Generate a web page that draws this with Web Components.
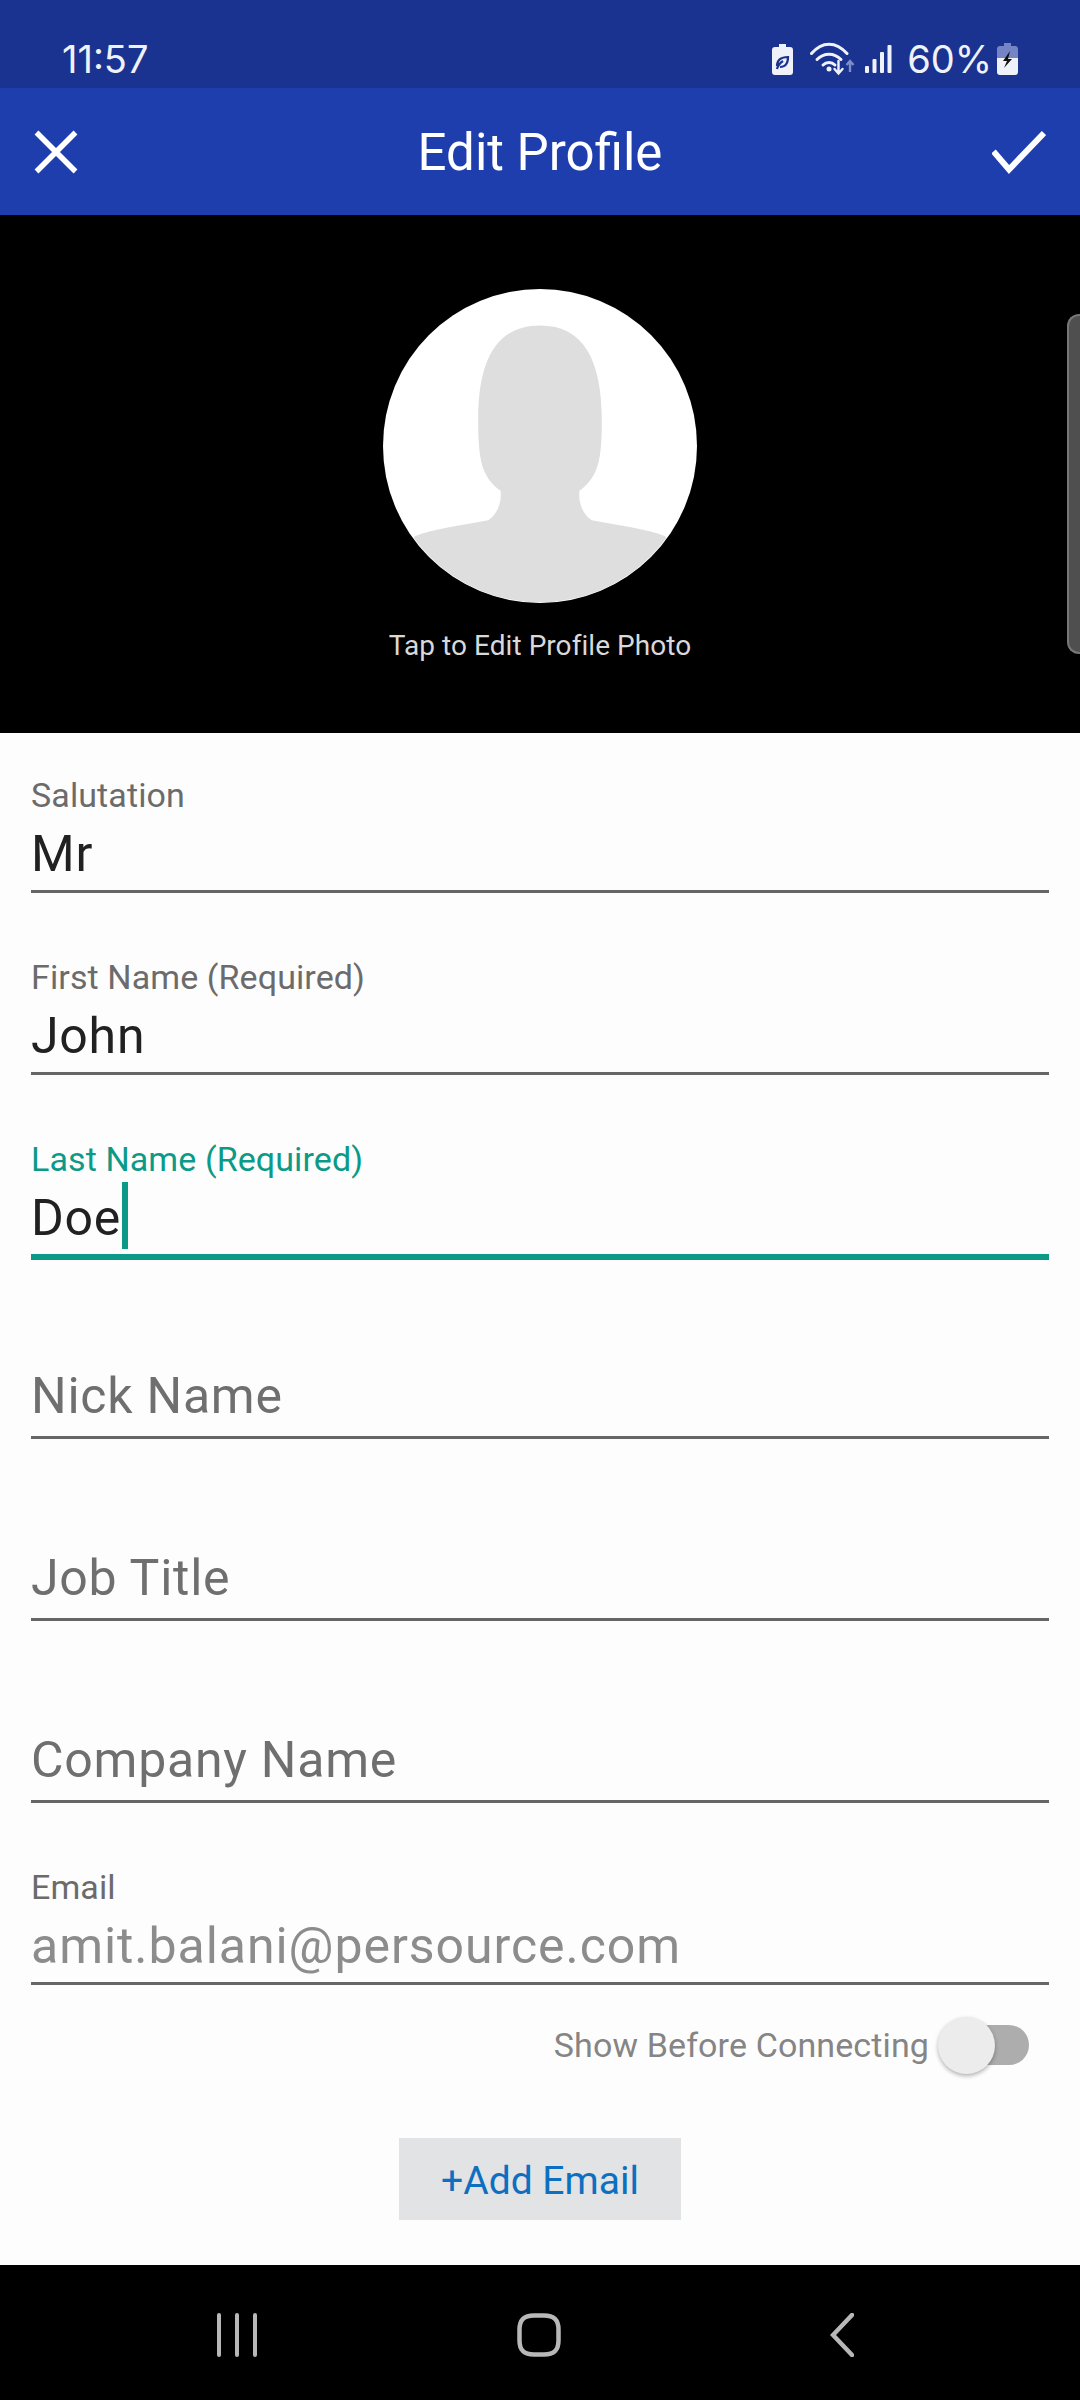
<!DOCTYPE html>
<html>
<head>
<meta charset="utf-8">
<title>Edit Profile</title>
<style>
  html, body { margin: 0; padding: 0; }
  body {
    width: 1080px;
    height: 2400px;
    overflow: hidden;
    display: flex;
    flex-direction: column;
    font-family: Roboto, "Liberation Sans", sans-serif;
    background: #fefdfe;
  }
</style>
</head>
<body>
  <status-bar time="11:57" level="60%"></status-bar>
  <app-bar title="Edit Profile"></app-bar>
  <profile-photo caption="Tap to Edit Profile Photo"></profile-photo>
  <profile-form>
    <form-field label="Salutation">Mr</form-field>
    <form-field label="First Name (Required)">John</form-field>
    <form-field label="Last Name (Required)" focused>Doe</form-field>
    <form-field placeholder>Nick Name</form-field>
    <form-field placeholder>Job Title</form-field>
    <form-field placeholder>Company Name</form-field>
    <form-field label="Email" disabled>amit.balani@persource.com</form-field>
    <show-toggle>Show Before Connecting</show-toggle>
    <add-button>+Add Email</add-button>
  </profile-form>
  <nav-bar></nav-bar>

<script>
// Barra de estado del teléfono
class StatusBar extends HTMLElement {
  constructor() {
    super();
    this.attachShadow({ mode: 'open' });
  }

  connectedCallback() {
    this.shadowRoot.innerHTML = `
      <style>
        :host {
          display: flex;
          align-items: center;
          height: 88px;
          padding: 30px 62px 0 62px;
          box-sizing: border-box;
          background: #1a3290;
          color: #f0f2fa;
          font-family: Inter, Roboto, sans-serif;
          font-size: 38px;
          font-weight: 400;
        }
        .time { flex: 1; }
        .icons { display: flex; align-items: center; }
        svg { display: block; }
        .level { margin: 0 5px 0 15px; }
      </style>
      <span class="time">${this.getAttribute('time')}</span>
      <div class="icons">
        <svg width="21" height="31" viewBox="0 0 21 31">
          <path d="M7 0h7v3h4a3 3 0 0 1 3 3v22a3 3 0 0 1-3 3H3a3 3 0 0 1-3-3V6a3 3 0 0 1 3-3h4z" fill="#f0f2fa"/>
          <path d="M5 22c0-6 4-9 11-9 0 7-3 10-8 10M5 25c1-4 3-6 6-8" fill="none" stroke="#1a3290" stroke-width="2.2"/>
        </svg>
        <svg width="45" height="34" viewBox="0 0 45 34" style="margin-left:17px">
          <g fill="none" stroke="#f0f2fa" stroke-width="3" stroke-linecap="round">
            <path d="M1.500 11.500C12 -1 26 -1 37 11.500"/>
            <path d="M7 17.500c7-7 17-7 24 0"/>
            <path d="M13 23c3.500-3.500 8.500-3.500 12 0"/>
            <path d="M28.500 19v12M24.500 27l4 4.500 4-4.500" stroke-width="2.400"/>
          </g>
          <circle cx="19" cy="27" r="2.500" fill="#f0f2fa"/>
          <path d="M40 30V20M36.500 23l3.500-4 3.500 4" fill="none" stroke="#7f8ec6" stroke-width="2.400"/>
        </svg>
        <svg width="27" height="28" viewBox="0 0 27 28" style="margin-left:10px">
          <g fill="#f0f2fa">
            <rect x="0" y="21" width="4" height="7" rx="1"/>
            <rect x="7.500" y="14" width="4" height="14" rx="1"/>
            <rect x="15" y="7" width="4" height="21" rx="1"/>
            <rect x="22.500" y="0" width="4" height="28" rx="1"/>
          </g>
        </svg>
        <span class="level">${this.getAttribute('level')}</span>
        <svg width="21" height="32" viewBox="0 0 21 32">
          <path d="M7 0h7v3h4a3 3 0 0 1 3 3v9H0V6a3 3 0 0 1 3-3h4z" fill="#7584c4"/>
          <path d="M0 15h21v14a3 3 0 0 1-3 3H3a3 3 0 0 1-3-3z" fill="#f0f2fa"/>
          <path d="M13 8L6 18h4l-3 7 8-9h-4l2-8z" fill="#111"/>
        </svg>
      </div>
    `;
  }
}

// Barra superior con cerrar, título y confirmar
class AppBar extends HTMLElement {
  constructor() {
    super();
    this.attachShadow({ mode: 'open' });
  }

  connectedCallback() {
    this.shadowRoot.innerHTML = `
      <style>
        :host {
          display: grid;
          grid-template-columns: 1fr auto 1fr;
          align-items: center;
          height: 127px;
          padding: 0 34px;
          box-sizing: border-box;
          background: #1e3eae;
          color: #fff;
        }
        h1 { margin: 2px 0 0; font-size: 51px; font-weight: 400; }
        svg { display: block; }
        .ok { justify-self: end; }
      </style>
      <svg width="44" height="44" viewBox="0 0 44 44">
        <path d="M2.500 2.500l39 39M41.500 2.500l-39 39" stroke="#fff" stroke-width="5.500" fill="none"/>
      </svg>
      <h1>${this.getAttribute('title')}</h1>
      <svg class="ok" width="54" height="44" viewBox="0 0 54 44">
        <path d="M1.500 21.500l15.500 18L52 3" stroke="#fff" stroke-width="6" fill="none"/>
      </svg>
    `;
  }
}

// Foto de perfil sobre fondo negro
class ProfilePhoto extends HTMLElement {
  constructor() {
    super();
    this.attachShadow({ mode: 'open' });
  }

  connectedCallback() {
    this.shadowRoot.innerHTML = `
      <style>
        :host {
          display: flex;
          flex-direction: column;
          align-items: center;
          position: relative;
          height: 518px;
          padding-top: 74px;
          box-sizing: border-box;
          background: #000;
        }
        svg { display: block; }
        p {
          margin: 26px 0 0;
          font-size: 28px;
          line-height: 33px;
          letter-spacing: 0.05px;
          color: #d9d9d9;
        }
        .handle {
          position: absolute;
          top: 99px;
          right: 0;
          width: 13px;
          height: 340px;
          box-sizing: border-box;
          background: #4f4f4f;
          border: 2px solid #777;
          border-right: 0;
          border-radius: 12px 0 0 12px;
        }
      </style>
      <svg width="314" height="314" viewBox="130 88 940 940">
        <defs>
          <clipPath id="disc"><circle cx="600" cy="558" r="468"/></clipPath>
        </defs>
        <circle cx="600" cy="558" r="470" fill="#fff"/>
        <path clip-path="url(#disc)" fill="#dfdedf" d="M600 197C470 197 415 300 415 480C415 600 425 650 482 692C486 730 470 765 445 780C370 795 280 805 225 828L100 1040H1100L975 828C920 805 830 795 755 780C730 765 714 730 718 692C775 650 785 600 785 480C785 300 730 197 600 197Z"/>
      </svg>
      <p>${this.getAttribute('caption')}</p>
      <div class="handle"></div>
    `;
  }
}

// Contenedor del formulario
class ProfileForm extends HTMLElement {
  constructor() {
    super();
    this.attachShadow({ mode: 'open' });
  }

  connectedCallback() {
    this.shadowRoot.innerHTML = `
      <style>
        :host {
          display: flex;
          flex-direction: column;
          gap: 24px;
          flex: 1;
          padding: 2px 31px 0;
          background: #fefdfe;
          overflow: hidden;
        }
      </style>
      <slot></slot>
    `;
  }
}

// Campo de texto con etiqueta y línea inferior
class FormField extends HTMLElement {
  constructor() {
    super();
    this.attachShadow({ mode: 'open' });
  }

  connectedCallback() {
    const label = this.getAttribute('label');
    this.shadowRoot.innerHTML = `
      <style>
        :host {
          display: flex;
          flex-direction: column;
          justify-content: flex-end;
          height: 158px;
          box-sizing: border-box;
          border-bottom: 3px solid #666;
          color: #212121;
        }
        :host([focused]) {
          height: 161px;
          margin-bottom: -3px;
          border-bottom: 6px solid #0b9a88;
        }
        :host([placeholder]) { color: #6f6f6f; }
        :host([disabled]) { color: #8c8c8c; }
        label {
          margin-bottom: 9px;
          font-size: 34px;
          line-height: 36px;
          letter-spacing: 0.1px;
          color: #6b6b6b;
        }
        :host([focused]) label { margin-bottom: 9px; color: #0b9a88; }
        .value {
          display: flex;
          align-items: center;
          height: 64px;
          margin-bottom: 4px;
          font-size: 50px;
          letter-spacing: 0.75px;
        }
        :host([placeholder]) .value { margin-bottom: 8px; }
        :host([focused]) .value { margin-bottom: 4px; }
        :host([disabled]) .value { letter-spacing: 0.95px; }
        .caret {
          width: 6px;
          height: 67px;
          margin-left: 1px;
          background: #0b9a88;
          transform: translateY(-3px);
        }
      </style>
      ${label ? `<label>${label}</label>` : ''}
      <div class="value"><slot></slot>${this.hasAttribute('focused') ? '<span class="caret"></span>' : ''}</div>
    `;
  }
}

// Texto con interruptor apagado
class ShowToggle extends HTMLElement {
  constructor() {
    super();
    this.attachShadow({ mode: 'open' });
  }

  connectedCallback() {
    this.shadowRoot.innerHTML = `
      <style>
        :host {
          display: flex;
          align-items: center;
          justify-content: flex-end;
          height: 58px;
          margin-top: 7px;
          padding-right: 20px;
          color: #858585;
          font-size: 34px;
          letter-spacing: 0.12px;
        }
        .track {
          position: relative;
          width: 90px;
          height: 40px;
          margin-left: 10px;
          border-radius: 20px;
          background: #adadad;
        }
        .thumb {
          position: absolute;
          left: -1px;
          top: -8px;
          width: 57px;
          height: 57px;
          border-radius: 50%;
          background: #ececec;
          box-shadow: 0 2px 4px rgba(0, 0, 0, .3);
        }
      </style>
      <slot></slot>
      <div class="track"><div class="thumb"></div></div>
    `;
  }
}

// Botón para añadir otro correo
class AddButton extends HTMLElement {
  constructor() {
    super();
    this.attachShadow({ mode: 'open' });
  }

  connectedCallback() {
    this.shadowRoot.innerHTML = `
      <style>
        :host {
          display: flex;
          align-items: center;
          justify-content: center;
          align-self: center;
          width: 282px;
          height: 82px;
          padding-top: 3px;
          box-sizing: border-box;
          margin-top: 40px;
          background: #e1e3e4;
          color: #0d6fc0;
          font-size: 39px;
        }
      </style>
      <slot></slot>
    `;
  }
}

// Barra de navegación de Android
class NavBar extends HTMLElement {
  constructor() {
    super();
    this.attachShadow({ mode: 'open' });
  }

  connectedCallback() {
    this.shadowRoot.innerHTML = `
      <style>
        :host {
          display: flex;
          align-items: flex-start;
          height: 135px;
          padding: 48px 0 0 217px;
          box-sizing: border-box;
          background: #000;
        }
        svg { display: block; }
        .home { margin-left: 260px; }
        .back { margin-left: 269px; }
      </style>
      <svg width="40" height="44" viewBox="0 0 40 44">
        <path d="M2 2v40M20 2v40M38 2v40" stroke="#b8b8b8" stroke-width="4" stroke-linecap="round" fill="none"/>
      </svg>
      <svg class="home" width="44" height="44" viewBox="0 0 44 44">
        <path d="M17 2.500h10c10 0 14.500 4.500 14.500 14v11c0 10-4.500 14-14.500 14H17c-10 0-14.500-4-14.500-14v-11c0-9.500 4.500-14 14.500-14z" stroke="#b8b8b8" stroke-width="4.500" fill="none"/>
      </svg>
      <svg class="back" width="24" height="44" viewBox="0 0 24 44">
        <path d="M22 2L3 22l19 20" stroke="#b8b8b8" stroke-width="4.500" stroke-linecap="round" fill="none"/>
      </svg>
    `;
  }
}

customElements.define('status-bar', StatusBar);
customElements.define('app-bar', AppBar);
customElements.define('profile-photo', ProfilePhoto);
customElements.define('profile-form', ProfileForm);
customElements.define('form-field', FormField);
customElements.define('show-toggle', ShowToggle);
customElements.define('add-button', AddButton);
customElements.define('nav-bar', NavBar);
</script>
</body>
</html>
